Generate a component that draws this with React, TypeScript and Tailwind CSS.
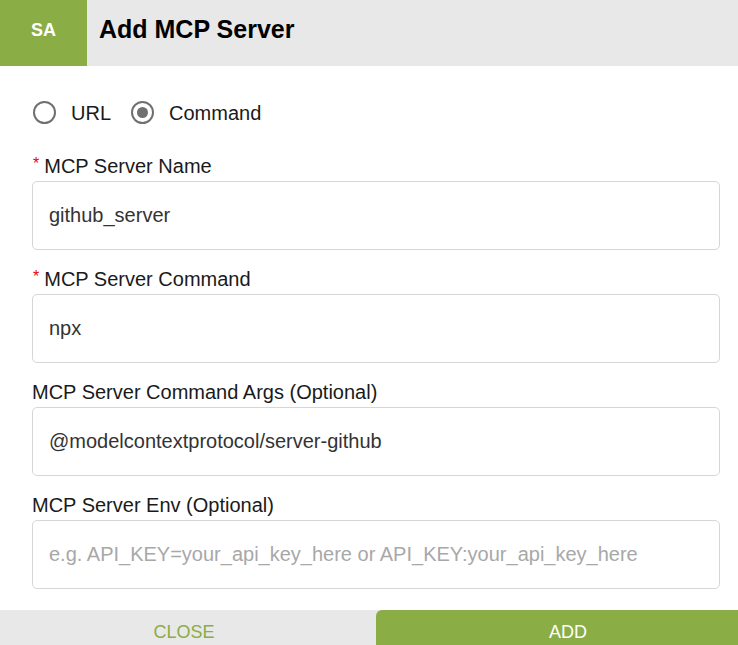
import { useState } from "react"

const font = { fontFamily: '"Liberation Sans", Arial, sans-serif' }

type Field = {
    label: string
    required?: boolean
    value?: string
    placeholder?: string
}

const fields: Field[] = [
    { label: "MCP Server Name", required: true, value: "github_server" },
    { label: "MCP Server Command", required: true, value: "npx" },
    { label: "MCP Server Command Args (Optional)", value: "@modelcontextprotocol/server-github" },
    { label: "MCP Server Env (Optional)", placeholder: "e.g. API_KEY=your_api_key_here or API_KEY:your_api_key_here" },
]

const Radio = ({ checked, label, onClick }: { checked: boolean; label: string; onClick: () => void }) => (
    <button type="button" onClick={onClick} className="flex items-center gap-[15px] text-[20px] text-[#1a1a1a]">
        <span className="flex items-center justify-center w-[23px] h-[23px] rounded-full border-2 border-[#707070]">
            {checked && <span className="w-[11px] h-[11px] rounded-full bg-[#707070]" />}
        </span>
        {label}
    </button>
)

export default function App() {
    const [mode, setMode] = useState<"url" | "command">("command")

    return (
        <div className="w-[738px] bg-white flex flex-col overflow-hidden" style={font}>
            {/* Cabecalho */}
            <header className="flex h-[66px] bg-[#e8e8e8]">
                <div className="w-[87px] pb-[6px] bg-[#8aad46] flex items-center justify-center text-white font-bold text-[18px]">SA</div>
                <h1 className="pl-3 pb-[6px] flex items-center font-bold text-[25px] text-black">Add MCP Server</h1>
            </header>

            {/* Formulario */}
            <div className="pl-8 pr-[18px] pt-[35px]">
                <div className="flex gap-[20px] h-[23px] pl-[1px]">
                    <Radio checked={mode === "url"} label="URL" onClick={() => setMode("url")} />
                    <Radio checked={mode === "command"} label="Command" onClick={() => setMode("command")} />
                </div>

                <div className="flex flex-col gap-[18px] mt-[31px]">
                    {fields.map((f) => (
                        <div key={f.label} className="flex flex-col">
                            <label className="flex items-start h-[23px] leading-[23px] text-[20px] text-[#1a1a1a] mb-[3px]">
                                {f.required && <span className="text-red-600 text-[16px] leading-[18px] mr-[5px] ml-[1px]">*</span>}
                                {f.label}
                            </label>
                            <input
                                defaultValue={f.value}
                                placeholder={f.placeholder}
                                className="h-[69px] w-full rounded-[5px] border border-[#d6d6d6] px-4 text-[20px] text-[#333] placeholder:text-[#a8a8a8] outline-none"
                                style={font}
                            />
                        </div>
                    ))}
                </div>
            </div>

            {/* Rodape */}
            <footer className="mt-[21px] flex gap-2 h-[44px] bg-[#e8e8e8]">
                <button type="button" className="flex-none w-[368px] flex items-center justify-center text-[#8aad46] text-[18px]">
                    CLOSE
                </button>
                <button type="button" className="flex-none w-[384px] rounded-tl-[6px] bg-[#8aad46] flex items-center justify-center text-white text-[18px]">
                    ADD
                </button>
            </footer>
        </div>
    )
}
